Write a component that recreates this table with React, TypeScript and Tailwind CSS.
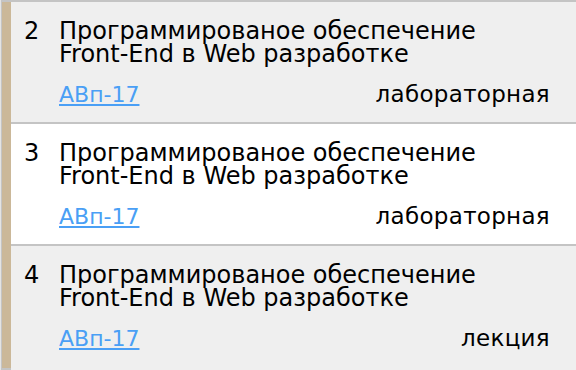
import React from "react";

const lessons = [
  { num: 2, group: "АВп-17", kind: "лабораторная", bg: "bg-[#efefef]" },
  { num: 3, group: "АВп-17", kind: "лабораторная", bg: "bg-white" },
  { num: 4, group: "АВп-17", kind: "лекция", bg: "bg-[#efefef]" },
];

export default function App() {
  return (
    <div className="w-[576px] h-[370px] overflow-hidden bg-[#e4e4e4] pl-[1px]">
      <div className="flex border-l border-t-2 border-b-2 border-[#c4c4c4] h-[370px]">
        {/* accent strip */}
        <div className="w-[9px] shrink-0 bg-[#cbb899]" />

        <div className="flex-1 flex flex-col">
          {lessons.map((l, i) => (
            <div
              key={l.num}
              className={`${l.bg} shrink-0 pl-[13px] pr-[26px] pt-[18px] ${
                i < lessons.length - 1 ? "h-[122px] border-b-2 border-[#c4c4c4]" : "h-[124px]"
              }`}
            >
              <div className="flex items-start font-['DejaVu_Sans',sans-serif] text-black">
                <span className="w-[35px] shrink-0 text-[24px] leading-[23px]">{l.num}</span>
                <span className="text-[24px] leading-[23px]">
                  Программированое обеспечение
                  <br />
                  Front-End в Web разработке
                </span>
              </div>
              <div className="flex items-baseline justify-between pl-[35px] mt-[15px] font-['DejaVu_Sans',sans-serif]">
                <a href="#" className="text-[22px] leading-[26px] text-[#4a9ff5] underline underline-offset-2">
                  {l.group}
                </a>
                <span className="text-[23px] leading-[26px] tracking-[0.3px] text-black">{l.kind}</span>
              </div>
            </div>
          ))}
        </div>
      </div>
    </div>
  );
}
